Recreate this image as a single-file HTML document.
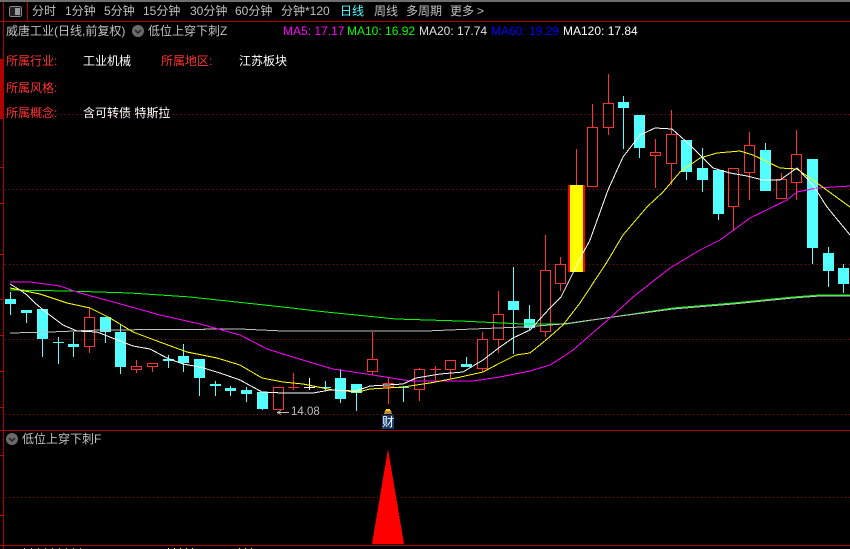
<!DOCTYPE html>
<html><head><meta charset="utf-8">
<style>
html,body{margin:0;padding:0;background:#000;}
#p{position:relative;width:850px;height:549px;overflow:hidden;background:#000;font-family:"Liberation Sans","WenQuanYi Zen Hei","Noto Sans CJK SC",sans-serif;font-size:12px;line-height:14px;}
#p span{position:absolute;white-space:nowrap;}
.g{color:#c0c0c0}.r{color:#ff3232}.w{color:#fff}
svg{position:absolute;left:0;top:0}
</style></head><body><div id="p">
<svg width="850" height="549" viewBox="0 0 850 549" shape-rendering="crispEdges" fill="none">
<rect x="0" y="0" width="850" height="2" fill="#6e6e6e"/>
<path d="M0 21.5H850M0 430.5H850M0 545.5H850M3.5 2V549M27.5 2V21" stroke="#b00000"/>
<rect x="0" y="59" width="3" height="60" fill="#b00000"/>
<path d="M0 167.5H3M0 203.5H3M0 254.5H3M0 299.5H3M0 335.5H3M0 371.5H3M0 407.5H3M0 455.5H3M0 515.5H3" stroke="#b00000"/>
<path d="M5 114.5H850M5 189.5H850M5 264.5H850M5 339.5H850M5 414.5H850M5 497.5H850" stroke="#a00000" stroke-dasharray="1 3"/>
<rect x="9.5" y="6.5" width="12" height="10" rx="2" stroke="#8a8a8a" fill="#222"/>
<rect x="15" y="8" width="5" height="7" fill="#9a9a9a"/>
<circle cx="138" cy="31" r="6" fill="#6a6a6a" shape-rendering="auto"/>
<path d="M135 30l3 3 3-3" stroke="#222" stroke-width="1.5" shape-rendering="auto"/>
<circle cx="12" cy="439" r="6" fill="#6a6a6a" shape-rendering="auto"/>
<path d="M9 438l3 3 3-3" stroke="#222" stroke-width="1.5" shape-rendering="auto"/>

<!-- cyan wicks -->
<path stroke="#54ffff" d="M10.5 292V315M26.5 310V323M42.5 309V357M58.5 337V364M53 342.5H64M73.5 332V357M105.5 317V343M120.5 325V374M168.5 355V368M183.5 344V372M199.5 359V396M215.5 381V396M230.5 386V396M246.5 387V402M262.5 392V410M325.5 381V390M340.5 369V403M356.5 384V411M403.5 386V402M466.5 357V367M513.5 267V354M529.5 305V330M623.5 96V149M639.5 115V158M686.5 140V180M702.5 148V192M718.5 170V220M765.5 143V191M812.5 159V264M828.5 247V287M843.5 264V293"/>
<!-- cyan bodies -->
<g fill="#54ffff">
<rect x="5" y="299" width="11" height="5"/><rect x="21" y="310" width="11" height="3"/><rect x="37" y="309" width="11" height="30"/><rect x="68" y="344" width="11" height="3"/><rect x="100" y="317" width="11" height="15"/><rect x="115" y="332" width="11" height="35"/><rect x="163" y="359" width="11" height="2"/><rect x="178" y="356" width="11" height="7"/><rect x="194" y="359" width="11" height="19"/><rect x="210" y="384" width="11" height="2"/><rect x="225" y="388" width="11" height="3"/><rect x="241" y="390" width="11" height="4"/><rect x="257" y="392" width="11" height="17"/>
<rect x="320" y="387" width="11" height="1"/><rect x="335" y="378" width="11" height="21"/><rect x="351" y="384" width="11" height="9"/><rect x="398" y="387" width="11" height="1"/><rect x="461" y="364" width="11" height="3"/><rect x="508" y="301" width="11" height="9"/><rect x="524" y="319" width="11" height="9"/>
<rect x="618" y="102" width="11" height="6"/><rect x="634" y="115" width="11" height="33"/><rect x="681" y="140" width="11" height="32"/><rect x="697" y="168" width="11" height="12"/><rect x="713" y="170" width="11" height="44"/><rect x="760" y="150" width="11" height="41"/><rect x="807" y="159" width="11" height="89"/><rect x="823" y="253" width="11" height="18"/><rect x="838" y="268" width="11" height="16"/>
</g>
<!-- red wicks -->
<path stroke="#ff3232" d="M89.5 307V317M89.5 347V353M136.5 360V366M136.5 370V373M152.5 367V372M293.5 373V390M288 387.5H299M372.5 332V359M372.5 372V375M388.5 377V383M388.5 387V404M419.5 368V369M419.5 390V401M435.5 366V380M430 369.5H441M450.5 370V379M482.5 332V339M482.5 369V372M498.5 291V314M498.5 340V353M545.5 235V270M545.5 332V337M560.5 257V264M560.5 284V291M576.5 149V185M592.5 104V127M608.5 74V103M608.5 128V135M655.5 139V152M655.5 156V188M671.5 110V134M671.5 164V185M733.5 207V231M749.5 132V145M749.5 173V200M781.5 173V179M796.5 130V154M796.5 183V200"/>
<!-- red hollow bodies -->
<g stroke="#ff3232">
<rect x="84.5" y="317.5" width="10" height="29"/><rect x="131.5" y="366.5" width="10" height="3"/><rect x="147.5" y="363.5" width="10" height="3"/><rect x="273.5" y="387.5" width="10" height="22"/><rect x="367.5" y="359.5" width="10" height="12"/><rect x="383.5" y="383.5" width="10" height="3"/><rect x="414.5" y="369.5" width="10" height="20"/><rect x="445.5" y="360.5" width="10" height="9"/><rect x="477.5" y="339.5" width="10" height="29"/><rect x="493.5" y="314.5" width="10" height="25"/><rect x="540.5" y="270.5" width="10" height="61"/><rect x="555.5" y="264.5" width="10" height="19"/>
<rect x="587.5" y="127.5" width="10" height="59"/><rect x="603.5" y="103.5" width="10" height="24"/><rect x="650.5" y="152.5" width="10" height="3"/><rect x="666.5" y="134.5" width="10" height="29"/><rect x="728.5" y="168.5" width="10" height="38"/><rect x="744.5" y="145.5" width="10" height="27"/><rect x="776.5" y="179.5" width="10" height="19"/><rect x="791.5" y="154.5" width="10" height="28"/>
</g>
<path stroke="#fff" d="M309.5 378V390M304 387.5H315"/>
<rect x="568" y="185" width="17" height="87" fill="#ff0000"/><rect x="570" y="185" width="13" height="87" fill="#ffff00"/>

<!-- MA lines -->
<path stroke="#00ff00" d="M10 290L67 291L130 293L190 297L283 307L326 312L396 319L460 321L523 324L566 324L613 317L673 308L733 303L793 297L820 295L850 295"/>
<path stroke="#c0c0c0" d="M10 333L50 332L100 330L240 329L283 331L426 331L473 329L523 327L563 324L613 317L673 309L733 304L793 298L820 296L850 296"/>
<path stroke="#ff00ff" d="M10 282L30 282L60 286L80 293L117 303L160 315L200 324L240 335L267 349L283 354L306 361L333 369L373 375L410 381L473 381L500 377L530 371L550 365L566 355L573 350L610 318L633 297L670 268L700 250L720 240L750 218L787 200L797 192L817 188L850 186"/>
<path stroke="#ffff00" d="M10 288L40 294L67 303L90 308L110 318L133 332L157 341L187 352L217 358L240 365L262 378L283 382L303 384L333 390L358 392L370 389L403 387L430 383L456 378L483 372L500 363L516 355L530 353L546 340L563 325L580 303L607 262L623 235L647 207L663 192L680 172L700 158L717 153L740 151L753 155L780 168L797 169L817 183L850 207"/>
<path stroke="#ffffff" d="M10 284L20 290L27 295L35 303L47 313L63 325L77 331L97 332L115 339L133 346L150 349L167 358L183 364L200 367L220 373L240 380L262 392L283 393L313 393L330 390L356 391L370 386L403 384L416 378L440 374L463 372L483 360L500 347L513 338L530 330L550 308L561 297L583 253L590 240L608 190L623 157L640 135L655 128L672 129L690 145L713 168L730 173L747 176L763 180L780 180L797 168L813 185L827 207L850 235"/>

<path d="M277 412.5H289M277 412.5l4-2M277 412.5l4 2" stroke="#c0c0c0"/>
<rect x="382" y="415" width="12" height="14" fill="#12396e"/>
<path d="M385 410h6l1 4h-8z" fill="#b08a40"/><rect x="386" y="409" width="4" height="2" fill="#ffd700"/>

<polygon points="388,449 372,544 404,544" fill="#ff0000"/>
<path d="M168 548.5H197M239 548.5H256" stroke-dasharray="1 5" stroke="#ffff00"/>
<path d="M24 548.5H82" stroke="#aaa" stroke-dasharray="1 6"/>
</svg>

<span class="g" style="left:32px;top:4px;letter-spacing:0">分时</span>
<span class="g" style="left:65px;top:4px">1分钟</span>
<span class="g" style="left:104px;top:4px">5分钟</span>
<span class="g" style="left:143px;top:4px">15分钟</span>
<span class="g" style="left:190px;top:4px">30分钟</span>
<span class="g" style="left:235px;top:4px">60分钟</span>
<span class="g" style="left:281px;top:4px">分钟*120</span>
<span style="left:340px;top:4px;color:#54ffff">日线</span>
<span class="g" style="left:374px;top:4px">周线</span>
<span class="g" style="left:406px;top:4px">多周期</span>
<span class="g" style="left:450px;top:4px">更多</span>
<span class="g" style="left:477px;top:4px">&gt;</span>

<span class="g" style="left:6px;top:24px">威唐工业(日线,前复权)</span>
<span class="g" style="left:148px;top:24px">低位上穿下刺Z</span>
<span style="left:283px;top:24px;color:#ff00ff">MA5: 17.17</span>
<span style="left:347px;top:24px;color:#00ff00">MA10: 16.92</span>
<span style="left:419px;top:24px;color:#e0e0e0">MA20: 17.74</span>
<span style="left:491px;top:24px;color:#0000ff">MA60: 19.29</span>
<span class="w" style="left:563px;top:24px">MA120: 17.84</span>

<span class="r" style="left:6px;top:54px">所属行业:</span>
<span class="w" style="left:83px;top:54px">工业机械</span>
<span class="r" style="left:161px;top:54px">所属地区:</span>
<span class="w" style="left:239px;top:54px">江苏板块</span>
<span class="r" style="left:6px;top:81px">所属风格:</span>
<span class="r" style="left:6px;top:106px">所属概念:</span>
<span class="w" style="left:83px;top:106px">含可转债 特斯拉</span>

<span class="g" style="left:291px;top:405px;font-size:11.5px">14.08</span>
<span class="w" style="left:382px;top:415px;font-size:12px">财</span>
<span class="g" style="left:22px;top:432px">低位上穿下刺F</span>
</div></body></html>
